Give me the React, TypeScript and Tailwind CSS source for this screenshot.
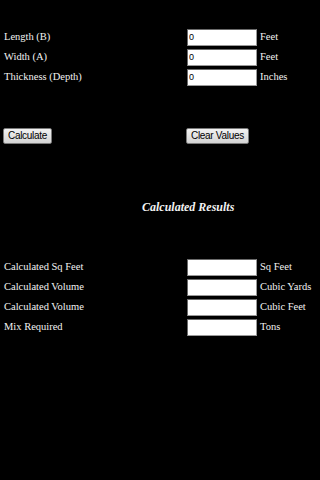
import React from "react";

const inputRows = [
  { label: "Length (B)", unit: "Feet" },
  { label: "Width (A)", unit: "Feet" },
  { label: "Thickness (Depth)", unit: "Inches" },
];

const resultRows = [
  { label: "Calculated Sq Feet", unit: "Sq Feet" },
  { label: "Calculated Volume", unit: "Cubic Yards" },
  { label: "Calculated Volume", unit: "Cubic Feet" },
  { label: "Mix Required", unit: "Tons" },
];

const Row: React.FC<{ label: string; unit: string; value?: string }> = ({
  label,
  unit,
  value,
}) => (
  <div className="flex h-[20px] items-center">
    <span className="w-[187px] pl-[4px]">{label}</span>
    <input
      type="text"
      readOnly
      value={value ?? ""}
      className="h-[17px] w-[70px] border border-[#9a9a9a] border-t-[#6a6a6a] border-l-[#6a6a6a] bg-white px-[1px] text-[9px] text-black outline-none [font-family:'Liberation_Sans',sans-serif]"
    />
    <span className="pl-[3px]">{unit}</span>
  </div>
);

const Button: React.FC<{ children: React.ReactNode }> = ({ children }) => (
  <button className="h-[16px] rounded-[2px] border border-[#7a7a7a] bg-gradient-to-b from-[#f2f2f2] to-[#d4d4d4] px-[4px] text-[10px] leading-none tracking-[-0.3px] text-black [font-family:'Liberation_Sans',sans-serif]">
    {children}
  </button>
);

export default function App() {
  return (
    <div className="min-h-[480px] w-[320px] bg-black text-[10.5px] text-[#f2f2f2] [font-family:'Liberation_Serif',serif]">
      <div className="pt-[27px]">
        {inputRows.map((r) => (
          <Row key={r.label} label={r.label} unit={r.unit} value="0" />
        ))}
      </div>

      <div className="mt-[41px] flex">
        <div className="w-[186px] pl-[3px]">
          <Button>Calculate</Button>
        </div>
        <Button>Clear Values</Button>
      </div>

      <div className="mt-[56px] pl-[142px] text-[12px] font-bold italic leading-[14px]">
        Calculated Results
      </div>

      <div className="mt-[43px]">
        {resultRows.map((r, i) => (
          <Row key={i} label={r.label} unit={r.unit} />
        ))}
      </div>
    </div>
  );
}
